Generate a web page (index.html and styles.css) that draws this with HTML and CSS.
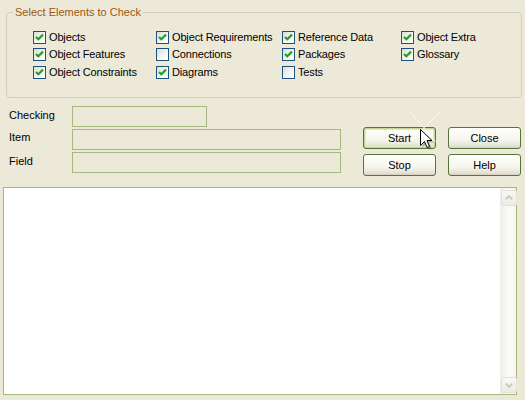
FILE: index.html
```html
<!DOCTYPE html>
<html>
<head>
<meta charset="utf-8">
<link rel="stylesheet" href="styles.css">
</head>
<body>
<div class="dialog">
  <fieldset class="group">
    <legend>Select Elements to Check</legend>
    <div class="checks">
      <label class="check"><span class="box on"><svg viewBox="0 0 11 11"><path d="M2 5 L4.3 7.3 L9 2.6" /></svg></span>Objects</label>
      <label class="check"><span class="box on"><svg viewBox="0 0 11 11"><path d="M2 5 L4.3 7.3 L9 2.6" /></svg></span>Object Features</label>
      <label class="check"><span class="box on"><svg viewBox="0 0 11 11"><path d="M2 5 L4.3 7.3 L9 2.6" /></svg></span>Object Constraints</label>
      <label class="check"><span class="box on"><svg viewBox="0 0 11 11"><path d="M2 5 L4.3 7.3 L9 2.6" /></svg></span>Object Requirements</label>
      <label class="check"><span class="box"></span>Connections</label>
      <label class="check"><span class="box on"><svg viewBox="0 0 11 11"><path d="M2 5 L4.3 7.3 L9 2.6" /></svg></span>Diagrams</label>
      <label class="check"><span class="box on"><svg viewBox="0 0 11 11"><path d="M2 5 L4.3 7.3 L9 2.6" /></svg></span>Reference Data</label>
      <label class="check"><span class="box on"><svg viewBox="0 0 11 11"><path d="M2 5 L4.3 7.3 L9 2.6" /></svg></span>Packages</label>
      <label class="check"><span class="box"></span>Tests</label>
      <label class="check"><span class="box on"><svg viewBox="0 0 11 11"><path d="M2 5 L4.3 7.3 L9 2.6" /></svg></span>Object Extra</label>
      <label class="check"><span class="box on"><svg viewBox="0 0 11 11"><path d="M2 5 L4.3 7.3 L9 2.6" /></svg></span>Glossary</label>
    </div>
  </fieldset>

  <div class="status">
    <div class="fields">
      <span class="lbl">Checking</span><div class="field short"></div>
      <span class="lbl lbl-item">Item</span><div class="field"></div>
      <span class="lbl">Field</span><div class="field"></div>
    </div>
    <div class="buttons">
      <button class="btn hover">Start</button>
      <button class="btn">Close</button>
      <button class="btn">Stop</button>
      <button class="btn">Help</button>
    </div>
  </div>

  <div class="log">
    <div class="log-body"></div>
    <div class="scrollbar">
      <div class="sb-btn"><svg viewBox="0 0 15 15"><path d="M4 9 L7.5 5.5 L11 9" /></svg></div>
      <div class="sb-track"></div>
      <div class="sb-btn"><svg viewBox="0 0 15 15"><path d="M4 6 L7.5 9.5 L11 6" /></svg></div>
    </div>
  </div>
</div>

<svg class="glint" width="40" height="40" viewBox="0 0 40 40">
  <path d="M4 36 L36 4 M6 4 L34 36" />
</svg>
<svg class="cursor" width="14" height="22" viewBox="0 0 14 22">
  <path class="shadow" d="M2.5 2.5 L2.5 18.5 L6.5 14.5 L9 20.5 L11.5 19.5 L9 13.5 L14 13.5 Z" />
  <path class="arrow" d="M0.5 0.5 L0.5 16.5 L4.5 12.5 L7 18.5 L9.5 17.5 L7 11.5 L12 11.5 Z" />
</svg>
</body>
</html>
```

FILE: styles.css
```css
html, body {
  margin: 0;
  padding: 0;
}
body {
  width: 525px;
  height: 400px;
  overflow: hidden;
  background: #ece9d8;
  font-family: "Liberation Sans", Arial, sans-serif;
  font-size: 11px;
  color: #000;
  position: relative;
}
.dialog {
  display: flex;
  flex-direction: column;
}
.group {
  margin: 5px 3px 0 6px;
  padding: 12px 0 13px 6px;
  border: 1px solid #d0cebf;
  border-radius: 4px;
  min-width: 0;
}
.group legend {
  color: #a1550c;
  padding: 0 2px;
  margin-left: 0;
  line-height: 14px;
  font-size: 11px;
}
.checks {
  display: grid;
  margin-left: 20px;
  grid-auto-flow: column;
  grid-template-rows: 17px 18px 18px;
  grid-template-columns: 123px 126px 119px auto;
}
.check {
  display: flex;
  align-items: flex-start;
  gap: 3px;
  line-height: 13px;
  white-space: nowrap;
  letter-spacing: -0.15px;
}
.box {
  width: 11px;
  height: 11px;
  border: 1px solid #1c5180;
  background: linear-gradient(135deg, #dcdcd7 0%, #f4f4f0 55%, #ffffff 100%);
  display: flex;
  flex: none;
}
.box svg {
  width: 11px;
  height: 11px;
}
.box svg path {
  fill: none;
  stroke: #21a121;
  stroke-width: 2.2;
}
.status {
  display: flex;
  justify-content: space-between;
  padding: 8px 4px 0 9px;
}
.fields {
  display: grid;
  grid-template-columns: 63px 269px;
  grid-auto-rows: 21px;
  row-gap: 2px;
  align-items: center;
}
.lbl {
  line-height: 13px;
  margin-top: -2px;
}
.lbl-item {
  margin-top: -4px;
}
.field {
  height: 21px;
  box-sizing: border-box;
  border: 1px solid #a5b97f;
  background: #ece9d8;
}
.field.short {
  width: 135px;
}
.buttons {
  display: grid;
  grid-template-columns: 73px 73px;
  grid-auto-rows: 22px;
  column-gap: 12px;
  row-gap: 5px;
  margin-top: 21px;
  align-content: start;
}
.btn {
  font-family: "Liberation Sans", Arial, sans-serif;
  font-size: 11px;
  color: #000;
  border: 1px solid #56743a;
  border-radius: 3px;
  background: linear-gradient(#fffffb 0%, #f6f5ee 60%, #e6e3d6 88%, #d6d0c0 100%);
  padding: 0;
  margin: 0;
}
.btn.hover {
  box-shadow: inset 0 0 0 1px #c6d49a, inset 0 0 0 2px #e2e9c4;
}
.log {
  margin: 11px 8px 0 3px;
  height: 208px;
  box-sizing: border-box;
  border: 1px solid #a5b97f;
  background: #ffffff;
  display: flex;
}
.log-body {
  flex: 1;
}
.scrollbar {
  width: 16px;
  display: flex;
  flex-direction: column;
  padding: 2px 0 1px;
  background: linear-gradient(90deg, #efeee7, #fbfbf9 60%, #f4f3ee);
}
.sb-btn {
  width: 14px;
  height: 14px;
  margin-left: 1px;
  border: 1px solid #e4e2d8;
  border-radius: 2px;
  background: linear-gradient(#f8f8f4, #ecebe3);
  flex: none;
  display: flex;
}
.sb-btn svg {
  width: 14px;
  height: 14px;
}
.sb-btn svg path {
  fill: none;
  stroke: #c9c7bc;
  stroke-width: 2;
}
.sb-track {
  flex: 1;
}
.glint {
  position: absolute;
  left: 404px;
  top: 108px;
  opacity: 0.7;
}
.glint path {
  stroke: #ffffff;
  stroke-width: 1;
  fill: none;
}
.cursor {
  position: absolute;
  left: 420px;
  top: 129px;
}
.cursor .shadow {
  fill: rgba(0,0,0,0.25);
}
.cursor .arrow {
  fill: #ffffff;
  stroke: #000000;
  stroke-width: 1;
  stroke-linejoin: miter;
}
```
